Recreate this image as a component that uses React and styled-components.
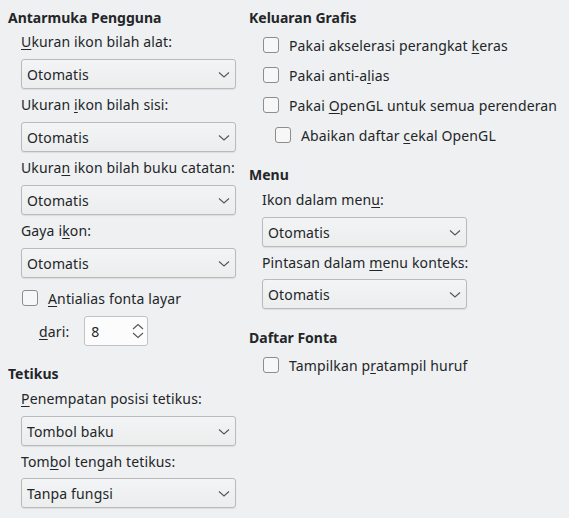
import React from "react";
import styled, { createGlobalStyle } from "styled-components";

const Global = createGlobalStyle`
  html, body { margin: 0; padding: 0; background: #eff0f1; }
  body {
    font-family: "Noto Sans", "DejaVu Sans", sans-serif;
    font-size: 14px;
    letter-spacing: 0.14px;
    color: #232629;
  }
`;

const Page = styled.div`
  width: 569px;
  height: 518px;
  display: grid;
  grid-template-columns: 241px 1fr;
  box-sizing: border-box;
  padding: 9px 0 0 8px;
  overflow: hidden;
`;

const Column = styled.div`
  display: flex;
  flex-direction: column;
`;

const Section = styled.section`
  display: flex;
  flex-direction: column;
  margin-top: ${(p) => p.$gap || 0}px;
`;

const Title = styled.div`
  font-weight: bold;
  letter-spacing: 0;
  line-height: 18px;
  height: 18px;
  white-space: nowrap;
`;

const Body = styled.div`
  display: flex;
  flex-direction: column;
  padding-left: ${(p) => p.$indent ?? 13}px;
`;

const Label = styled.div`
  line-height: 18px;
  height: 18px;
  margin-top: ${(p) => p.$top ?? 7}px;
  margin-bottom: ${(p) => p.$bottom ?? 8}px;
  white-space: nowrap;
`;

const Mn = styled.span`
  text-decoration: underline;
  text-decoration-thickness: 1px;
  text-underline-offset: 2px;
`;

const Combo = styled.div`
  box-sizing: border-box;
  width: ${(p) => p.$w}px;
  height: 30px;
  border: 1px solid #b9babc;
  border-radius: 3px;
  background: linear-gradient(#f3f4f5, #eceded);
  box-shadow: 0 1px 1px rgba(0, 0, 0, 0.08);
  display: flex;
  align-items: center;
  justify-content: space-between;
  padding: 0 5px 0 5px;
  white-space: nowrap;
`;

const CheckRow = styled.label`
  display: flex;
  align-items: center;
  height: 30px;
  margin-top: ${(p) => p.$top ?? 0}px;
  padding-left: ${(p) => p.$indent ?? 0}px;
  white-space: nowrap;
`;

const Box = styled.span`
  box-sizing: border-box;
  width: 16px;
  height: 16px;
  margin-left: 1px;
  margin-right: 10px;
  border: 1px solid #8b8d8f;
  border-radius: 3px;
  background: #f7f7f8;
  flex: none;
`;

const SpinRow = styled.div`
  display: flex;
  align-items: center;
  height: 30px;
  margin-top: 3px;
  padding-left: 18px;
  gap: 15px;
`;

const Spin = styled.div`
  box-sizing: border-box;
  width: 64px;
  height: 30px;
  border: 1px solid #c1c2c4;
  border-radius: 3px;
  background: #fcfcfc;
  display: flex;
  align-items: center;
  justify-content: space-between;
  padding: 0 3px 0 6px;
`;

const Chevron = () => (
  <svg width="12" height="7" viewBox="0 0 12 7">
    <path d="M1 1.5 L6 6 L11 1.5" fill="none" stroke="#55575a" strokeWidth="1.1" />
  </svg>
);

const Arrows = () => (
  <svg width="12" height="16" viewBox="0 0 12 16">
    <path d="M1 6 L6 1.5 L11 6" fill="none" stroke="#55575a" strokeWidth="1.1" />
    <path d="M1 10 L6 14.5 L11 10" fill="none" stroke="#55575a" strokeWidth="1.1" />
  </svg>
);

const Select = ({ value, w }) => (
  <Combo $w={w}>
    <span>{value}</span>
    <Chevron />
  </Combo>
);

const Check = ({ children, indent, top }) => (
  <CheckRow $indent={indent} $top={top}>
    <Box />
    <span>{children}</span>
  </CheckRow>
);

export default function App() {
  return (
    <>
      <Global />
      <Page>
        <Column>
          <Section>
            <Title>Antarmuka Pengguna</Title>
            <Body $indent={13}>
              <Label $top={6}>
                <Mn>U</Mn>kuran ikon bilah alat:
              </Label>
              <Select value="Otomatis" w={215} />
              <Label>
                Ukuran <Mn>i</Mn>kon bilah sisi:
              </Label>
              <Select value="Otomatis" w={215} />
              <Label>
                Ukura<Mn>n</Mn> ikon bilah buku catatan:
              </Label>
              <Select value="Otomatis" w={215} />
              <Label>
                Gaya i<Mn>k</Mn>on:
              </Label>
              <Select value="Otomatis" w={215} />
              <Check top={5}>
                <Mn>A</Mn>ntialias fonta layar
              </Check>
              <SpinRow>
                <span>
                  <Mn>d</Mn>ari:
                </span>
                <Spin>
                  <span>8</span>
                  <Arrows />
                </Spin>
              </SpinRow>
            </Body>
          </Section>
          <Section $gap={19}>
            <Title>Tetikus</Title>
            <Body $indent={13}>
              <Label>
                <Mn>P</Mn>enempatan posisi tetikus:
              </Label>
              <Select value="Tombol baku" w={215} />
              <Label $bottom={7}>
                Tom<Mn>b</Mn>ol tengah tetikus:
              </Label>
              <Select value="Tanpa fungsi" w={215} />
            </Body>
          </Section>
        </Column>
        <Column>
          <Section>
            <Title>Keluaran Grafis</Title>
            <Body $indent={13}>
              <Check top={3}>
                Pakai akselerasi perangkat <Mn>k</Mn>eras
              </Check>
              <Check>
                Pakai anti-a<Mn>l</Mn>ias
              </Check>
              <Check>
                Pakai <Mn>O</Mn>penGL untuk semua perenderan
              </Check>
              <Check indent={12}>
                Abaikan daftar <Mn>c</Mn>ekal OpenGL
              </Check>
            </Body>
          </Section>
          <Section $gap={16}>
            <Title>Menu</Title>
            <Body $indent={13}>
              <Label>
                Ikon dalam men<Mn>u</Mn>:
              </Label>
              <Select value="Otomatis" w={205} />
              <Label $bottom={7}>
                Pintasan dalam <Mn>m</Mn>enu konteks:
              </Label>
              <Select value="Otomatis" w={205} />
            </Body>
          </Section>
          <Section $gap={20}>
            <Title>Daftar Fonta</Title>
            <Body $indent={13}>
              <Check top={3}>
                Tampilkan p<Mn>r</Mn>atampil huruf
              </Check>
            </Body>
          </Section>
        </Column>
      </Page>
    </>
  );
}
